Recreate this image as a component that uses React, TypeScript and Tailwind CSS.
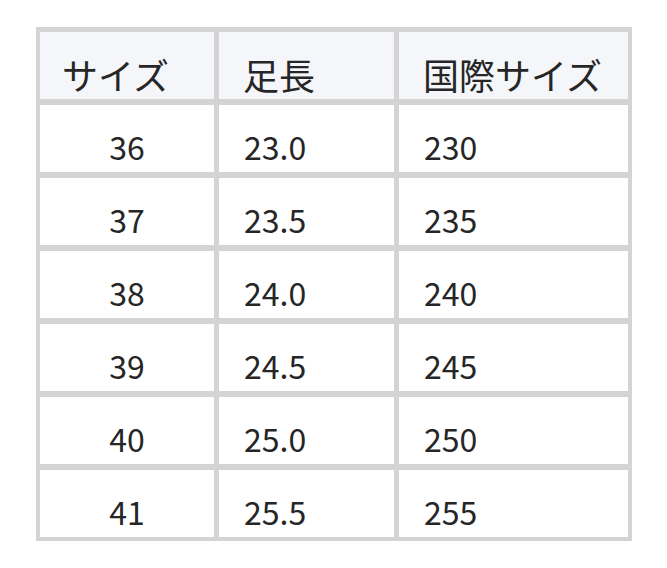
import React from "react";

const rows: [string, string, string][] = [
  ["36", "23.0", "230"],
  ["37", "23.5", "235"],
  ["38", "24.0", "240"],
  ["39", "24.5", "245"],
  ["40", "25.0", "250"],
  ["41", "25.5", "255"],
];

export default function App() {
  return (
    <div
      className="w-[667px] h-[568px] bg-white pt-[27px] pl-[36px]"
      style={{ fontFamily: '"Noto Sans CJK JP", "Noto Sans", sans-serif' }}
    >
      <div className="grid w-[596px] grid-cols-[174px_175px_229px] grid-rows-[67px_67px_67px_67px_67px_67px_67px] gap-x-[5px] gap-y-[6px] bg-[#d4d4d4] pt-[5px] px-[4px] pb-[4px] text-[#262626]">
        <div className="flex items-end bg-[#f5f6fa] pl-[22px] pb-[7px] text-[36px] leading-none">サイズ</div>
        <div className="flex items-end bg-[#f5f6fa] pl-6 pb-[7px] text-[36px] leading-none">足長</div>
        <div className="flex items-end bg-[#f5f6fa] pl-6 pb-[7px] text-[36px] leading-none">国際サイズ</div>
        {rows.map((r) => (
          <React.Fragment key={r[0]}>
            <div className="flex items-end justify-center bg-white pb-[10px] text-[32px] leading-none">{r[0]}</div>
            <div className="flex items-end bg-white pl-[25px] pb-[10px] text-[32px] leading-none">{r[1]}</div>
            <div className="flex items-end bg-white pl-[25px] pb-[10px] text-[32px] leading-none">{r[2]}</div>
          </React.Fragment>
        ))}
      </div>
    </div>
  );
}
